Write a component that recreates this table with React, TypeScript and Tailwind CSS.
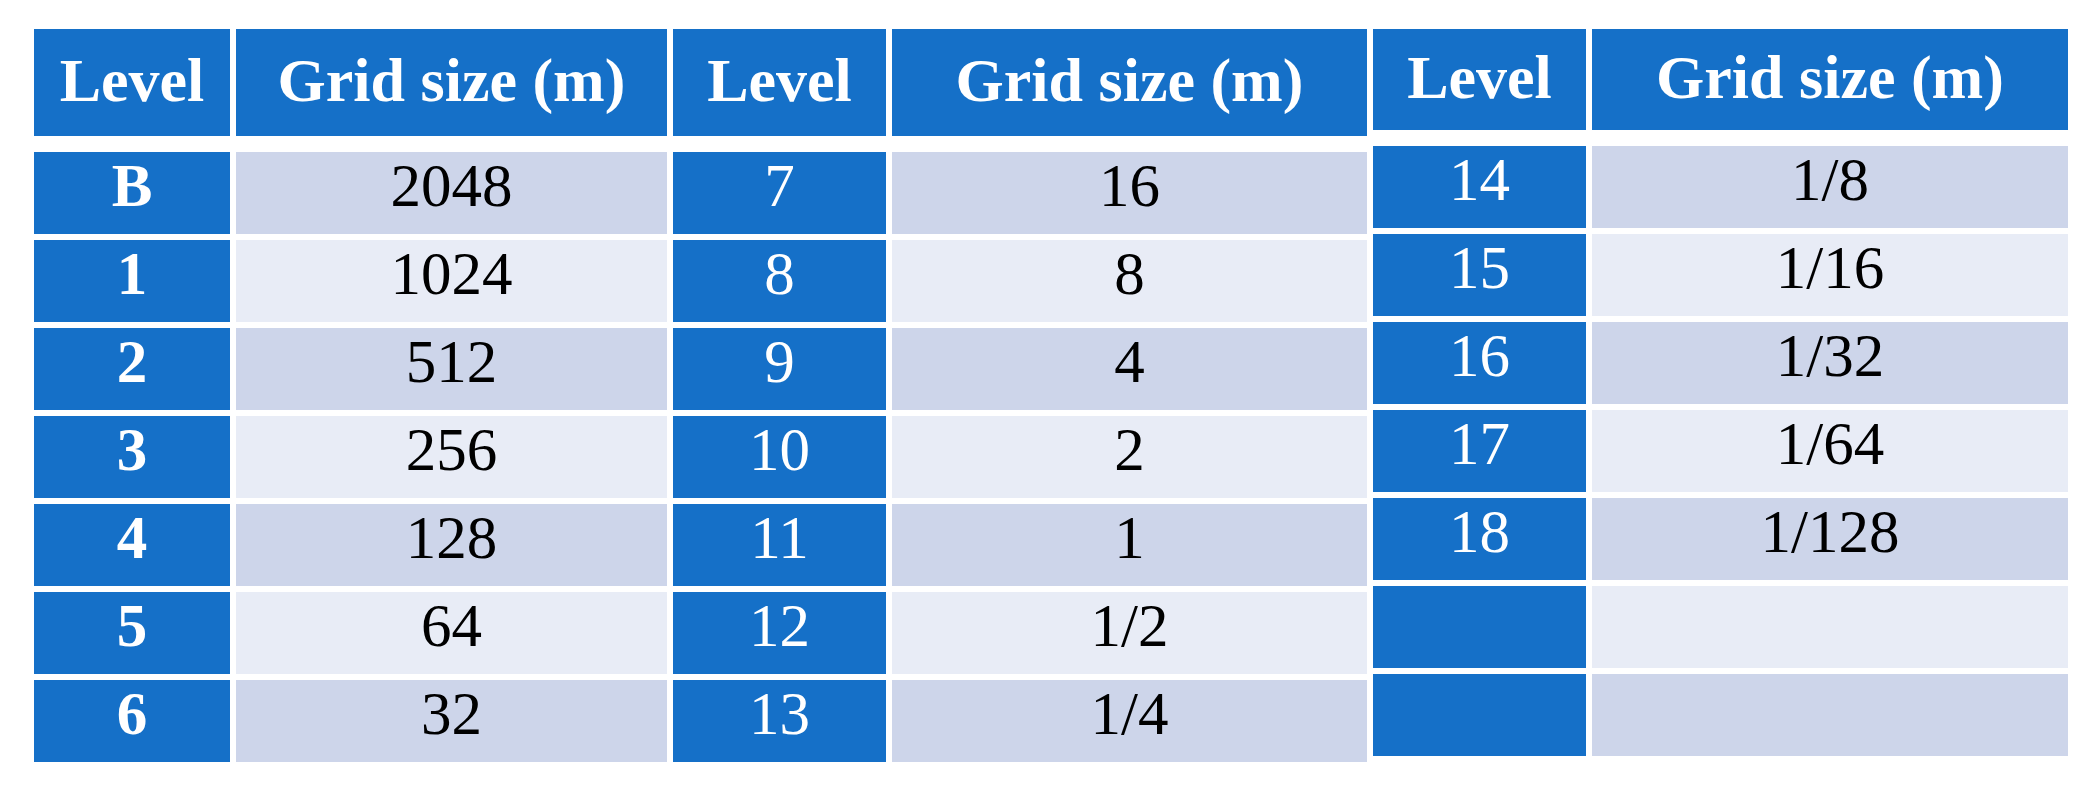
import React from "react";

type Table = {
  levelW: string;
  gridW: string;
  headH: string;
  boldLevels: boolean;
  rows: [string, string][];
};

const tables: Table[] = [
  {
    levelW: "w-[196px]",
    gridW: "w-[431px]",
    headH: "h-[107px]",
    boldLevels: true,
    rows: [
      ["B", "2048"],
      ["1", "1024"],
      ["2", "512"],
      ["3", "256"],
      ["4", "128"],
      ["5", "64"],
      ["6", "32"],
    ],
  },
  {
    levelW: "w-[213px]",
    gridW: "w-[475px]",
    headH: "h-[107px]",
    boldLevels: false,
    rows: [
      ["7", "16"],
      ["8", "8"],
      ["9", "4"],
      ["10", "2"],
      ["11", "1"],
      ["12", "1/2"],
      ["13", "1/4"],
    ],
  },
  {
    levelW: "w-[213px]",
    gridW: "w-[476px]",
    headH: "h-[101px]",
    boldLevels: false,
    rows: [
      ["14", "1/8"],
      ["15", "1/16"],
      ["16", "1/32"],
      ["17", "1/64"],
      ["18", "1/128"],
      ["", ""],
      ["", ""],
    ],
  },
];

const LevelTable = ({ t }: { t: Table }) => (
  <div className="flex flex-col">
    {/* header */}
    <div className={`flex gap-[6px] ${t.headH}`}>
      <div className={`${t.levelW} bg-[#1570c8] text-white font-bold text-[62px] leading-none flex items-center justify-center pb-[6px]`}>
        Level
      </div>
      <div className={`${t.gridW} bg-[#1570c8] text-white font-bold text-[62px] leading-none flex items-center justify-center pb-[6px]`}>
        Grid size (m)
      </div>
    </div>
    <div className="flex flex-col gap-[6px] mt-[16px]">
      {t.rows.map(([lvl, size], i) => (
        <div key={i} className="flex gap-[6px] h-[82px]">
          <div
            className={`${t.levelW} bg-[#1570c8] text-white text-[61px] leading-none flex items-center justify-center pb-[15px] ${
              t.boldLevels ? "font-bold" : "font-normal"
            }`}
          >
            {lvl}
          </div>
          <div
            className={`${t.gridW} ${
              i % 2 === 0 ? "bg-[#cdd5ea]" : "bg-[#e8ecf6]"
            } text-black text-[61px] leading-none flex items-center justify-center pb-[15px]`}
          >
            {size}
          </div>
        </div>
      ))}
    </div>
  </div>
);

export default function App() {
  return (
    <div
      className="w-[2095px] h-[801px] bg-white pl-[34px] pt-[29px] flex gap-[6px]"
      style={{ fontFamily: '"Liberation Serif", "Times New Roman", serif' }}
    >
      {tables.map((t, i) => (
        <LevelTable key={i} t={t} />
      ))}
    </div>
  );
}
